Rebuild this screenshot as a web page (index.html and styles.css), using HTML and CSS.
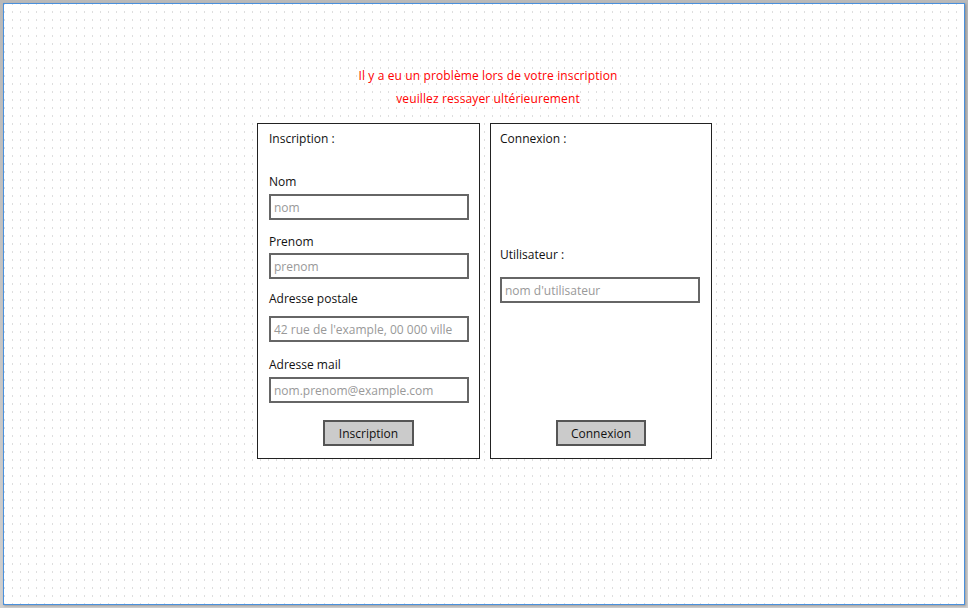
FILE: index.html
```html
<!DOCTYPE html>
<html lang="fr">
<head>
<meta charset="utf-8">
<title>Inscription</title>
<link rel="stylesheet" href="styles.css">
</head>
<body>
<div class="frame">
  <div class="error">
    <p>Il y a eu un problème lors de votre inscription</p>
    <p>veuillez ressayer ultérieurement</p>
  </div>
  <div class="panels">
    <section class="panel panel-left">
      <div class="title">Inscription :</div>
      <div class="label l-nom">Nom</div>
      <div class="field f-nom">nom</div>
      <div class="label l-prenom">Prenom</div>
      <div class="field f-prenom">prenom</div>
      <div class="label l-adr">Adresse postale</div>
      <div class="field f-adr">42 rue de l'example, 00 000 ville</div>
      <div class="label l-mail">Adresse mail</div>
      <div class="field f-mail">nom.prenom@example.com</div>
      <div class="btn btn-insc">Inscription</div>
    </section>
    <section class="panel panel-right">
      <div class="title">Connexion :</div>
      <div class="label l-user">Utilisateur :</div>
      <div class="field f-user">nom d'utilisateur</div>
      <div class="btn btn-conn">Connexion</div>
    </section>
  </div>
</div>
</body>
</html>
```

FILE: styles.css
```css
html, body {
  margin: 0;
  padding: 0;
}
body {
  width: 968px;
  height: 608px;
  background: linear-gradient(#b9b9b9, #cfcfcf);
  font-family: "Open Sans", "DejaVu Sans", sans-serif;
  font-size: 12px;
  color: #111;
  overflow: hidden;
}
.frame {
  box-sizing: border-box;
  margin: 3px 0 0 3px;
  width: 962px;
  height: 602px;
  border: 1px solid #4a90dc;
  box-shadow: 1px 1px 2px rgba(0, 0, 0, 0.25);
  background-color: #fff;
  background-image:
    linear-gradient(to bottom, transparent 0 2px, #fff 2px),
    linear-gradient(to right, #dedede 0 1px, #fff 1px);
  background-size: 8px 8px, 8px 8px;
  background-position: 0 7px, 0 7px;
  display: flex;
  flex-direction: column;
  align-items: center;
  padding-top: 60px;
}
.error {
  color: #f00;
  text-align: center;
  line-height: 23px;
  letter-spacing: 0.12px;
  margin-left: 8px;
}
.error p {
  margin: 0;
}
.panels {
  display: flex;
  gap: 10px;
  margin-top: 13px;
  margin-left: 1px;
}
.panel {
  box-sizing: border-box;
  height: 336px;
  border: 1px solid #222;
  background: #fff;
  display: flex;
  flex-direction: column;
  align-items: flex-start;
  line-height: 16px;
}
.panel-left {
  width: 223px;
  padding: 7px 0 0 11px;
}
.panel-right {
  width: 222px;
  padding: 7px 0 12px 9px;
}
.label, .title {
  color: #111;
}
.label {
  padding-top: 1px;
}
.field {
  box-sizing: border-box;
  width: 200px;
  height: 26px;
  border: 2px solid #666;
  color: #999;
  padding: 1px 0 0 3px;
  line-height: 22px;
  background: #fff;
  white-space: nowrap;
  overflow: hidden;
}
.l-nom { margin-top: 26px; }
.f-nom { margin-top: 4px; }
.l-prenom { margin-top: 13px; }
.f-prenom { margin-top: 3px; }
.l-adr { margin-top: 11px; }
.f-adr { margin-top: 9px; }
.l-mail { margin-top: 14px; }
.f-mail { margin-top: 4px; }
.l-user { margin-top: 99px; }
.f-user { margin-top: 14px; }
.btn {
  box-sizing: border-box;
  height: 26px;
  border: 2px solid #555;
  background: #cbcbcb;
  color: #111;
  text-align: center;
  line-height: 23px;
  align-self: center;
}
.btn-insc {
  width: 91px;
  margin-top: 17px;
  margin-left: -11px;
}
.btn-conn {
  width: 90px;
  margin-top: auto;
  margin-left: -9px;
}
```
